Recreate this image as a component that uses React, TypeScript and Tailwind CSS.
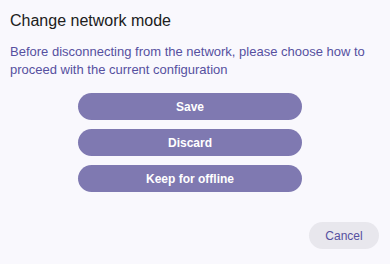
import React from 'react';

const options = ['Save', 'Discard', 'Keep for offline'];

const App: React.FC = () => {
  return (
    <div className="w-[390px] h-[264px] bg-[#f9f8fd] font-['Liberation_Sans',Arial,sans-serif] flex flex-col">
      <h1 className="px-[10px] pt-[11px] text-[16px] leading-[20px] text-[#202020]">Change network mode</h1>
      <p className="px-[10px] pt-[12px] text-[13px] leading-[18px] text-[#5650a0]">
        Before disconnecting from the network, please choose how to proceed with the current configuration
      </p>
      <div className="flex flex-col items-center gap-[9px] pt-[14px] pr-[10px]">
        {options.map((label) => (
          <button
            key={label}
            className="w-[224px] h-[27px] rounded-full bg-[#7f79b1] text-white text-[12px] font-bold"
          >
            {label}
          </button>
        ))}
      </div>
      <div className="flex justify-end px-[11px] mt-auto pb-[15px]">
        <button className="w-[70px] h-[27px] rounded-full bg-[#e8e7ed] text-[#5650a0] text-[12px]">Cancel</button>
      </div>
    </div>
  );
};

export default App;
